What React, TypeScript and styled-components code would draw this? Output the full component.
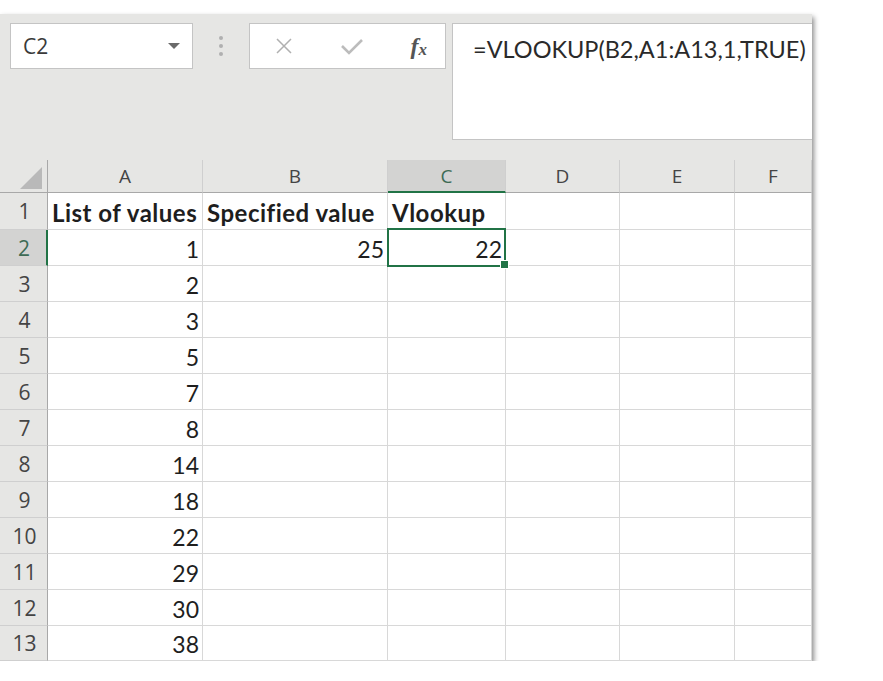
import React from "react";
import styled, { createGlobalStyle, css } from "styled-components";

const GlobalStyle = createGlobalStyle`
  body {
    margin: 0;
    background: #ffffff;
  }
`;

const columns = ["A", "B", "C", "D", "E", "F"];
const widths = [48, 155, 185, 118, 114, 115, 77];

type Row = { a: string; b?: string; c?: string; bold?: boolean };

const rows: Row[] = [
  { a: "List of values", b: "Specified value", c: "Vlookup", bold: true },
  { a: "1", b: "25", c: "22" },
  { a: "2" },
  { a: "3" },
  { a: "5" },
  { a: "7" },
  { a: "8" },
  { a: "14" },
  { a: "18" },
  { a: "22" },
  { a: "29" },
  { a: "30" },
  { a: "38" },
];

export default function App() {
  return (
    <>
      <GlobalStyle />
      <Frame>
        <Toolbar>
          <NameBox>
            <span>C2</span>
            <Caret />
          </NameBox>
          <Dots>
            <i />
            <i />
            <i />
          </Dots>
          <FxButtons>
            <svg width="18" height="18" viewBox="0 0 18 18">
              <path d="M2 2 L16 16 M16 2 L2 16" stroke="#b0b0b0" strokeWidth="1.5" fill="none" />
            </svg>
            <svg width="24" height="20" viewBox="0 0 24 20">
              <path d="M2 10 L9 17 L22 4" stroke="#bcbcbc" strokeWidth="2.6" fill="none" />
            </svg>
            <FxLabel>
              f<sub>x</sub>
            </FxLabel>
          </FxButtons>
          <FormulaInput>=VLOOKUP(B2,A1:A13,1,TRUE)</FormulaInput>
        </Toolbar>
        <Grid>
          <Corner>
            <svg width="22" height="22" viewBox="0 0 22 22">
              <path d="M22 0 L22 22 L0 22 Z" fill="#b9b9b9" />
            </svg>
          </Corner>
          {columns.map((c) => (
            <ColHead key={c} $selected={c === "C"}>
              {c}
            </ColHead>
          ))}
          {rows.map((r, i) => {
            const n = i + 1;
            return (
              <React.Fragment key={n}>
                <RowHead $selected={n === 2}>{n}</RowHead>
                <Cell $bold={r.bold}>{r.a}</Cell>
                <Cell $bold={r.bold}>{r.b}</Cell>
                <Cell $bold={r.bold}>
                  {r.c}
                  {n === 2 && <Handle />}
                </Cell>
                <Cell />
                <Cell />
                <Cell />
              </React.Fragment>
            );
          })}
        </Grid>
        <Selection />
      </Frame>
    </>
  );
}

const Frame = styled.div`
  position: relative;
  margin-top: 14px;
  width: 812px;
  box-shadow: 2px 3px 5px rgba(0, 0, 0, 0.45);
  font-family: "Lato", "Open Sans", sans-serif;
`;

const Toolbar = styled.div`
  height: 146px;
  box-sizing: border-box;
  background: #e6e6e4;
  display: flex;
  align-items: flex-start;
  padding: 9px 0 0 10px;
`;

const NameBox = styled.div`
  width: 183px;
  height: 46px;
  box-sizing: border-box;
  background: #fff;
  border: 1px solid #c4c4c4;
  display: flex;
  align-items: center;
  justify-content: space-between;
  padding: 0 12px 0 12px;
  font-family: "Open Sans", sans-serif;
  font-size: 21px;
  color: #3a3a3a;
`;

const Caret = styled.span`
  width: 0;
  height: 0;
  border-left: 6px solid transparent;
  border-right: 6px solid transparent;
  border-top: 6px solid #6a6a6a;
`;

const Dots = styled.div`
  width: 56px;
  height: 46px;
  display: flex;
  flex-direction: column;
  align-items: center;
  justify-content: center;
  gap: 4px;

  i {
    width: 4px;
    height: 4px;
    border-radius: 50%;
    background: #b0b0b0;
  }
`;

const FxButtons = styled.div`
  width: 197px;
  height: 46px;
  box-sizing: border-box;
  background: #fff;
  border: 1px solid #c4c4c4;
  display: flex;
  align-items: center;
  justify-content: space-between;
  padding: 0 18px 0 25px;
`;

const FxLabel = styled.span`
  font-family: "Liberation Serif", serif;
  font-style: italic;
  font-weight: bold;
  font-size: 24px;
  color: #555;

  sub {
    font-size: 17px;
    vertical-align: -1px;
  }
`;

const FormulaInput = styled.div`
  flex: 1;
  margin-left: 6px;
  height: 117px;
  box-sizing: border-box;
  background: #fff;
  border: 1px solid #c4c4c4;
  border-right: none;
  padding: 11px 0 0 20px;
  font-size: 23.5px;
  color: #2a2a2a;
  white-space: nowrap;
  overflow: hidden;
`;

const Grid = styled.div`
  display: grid;
  grid-template-columns: ${widths.map((w) => `${w}px`).join(" ")};
  grid-template-rows: 33px 37px repeat(11, 36px) 35px;
  background: #fff;
`;

const headBase = css`
  background: #e6e6e4;
  display: flex;
  align-items: center;
  box-sizing: border-box;
  font-family: "Open Sans", sans-serif;
  color: #444;
`;

const Corner = styled.div`
  ${headBase};
  justify-content: flex-end;
  align-items: flex-end;
  padding: 0 5px 3px 0;
  border-right: 1px solid #a8a8a8;
  border-bottom: 1px solid #a8a8a8;
`;

const ColHead = styled.div<{ $selected?: boolean }>`
  ${headBase};
  justify-content: center;
  font-size: 19px;
  border-right: 1px solid #cfcfcf;
  border-bottom: 1px solid #a8a8a8;
  ${(p) =>
    p.$selected &&
    css`
      background: #d3d3d2;
      color: #3d6b55;
      border-bottom: 2px solid #217346;
    `}
`;

const RowHead = styled.div<{ $selected?: boolean }>`
  ${headBase};
  justify-content: center;
  padding-left: 2px;
  font-size: 21px;
  border-right: 1px solid #a8a8a8;
  border-bottom: 1px solid #cfcfcf;
  ${(p) =>
    p.$selected &&
    css`
      background: #d3d3d2;
      color: #3d6b55;
      border-right: 2px solid #217346;
    `}
`;

const Cell = styled.div<{ $bold?: boolean }>`
  position: relative;
  box-sizing: border-box;
  border-right: 1px solid #d8d8d8;
  border-bottom: 1px solid #d8d8d8;
  display: flex;
  align-items: center;
  justify-content: ${(p) => (p.$bold ? "flex-start" : "flex-end")};
  padding: 2px 3px 0 4px;
  font-size: ${(p) => (p.$bold ? "24px" : "23px")};
  font-weight: ${(p) => (p.$bold ? 700 : 400)};
  letter-spacing: ${(p) => (p.$bold ? "0.5px" : "0")};
  color: #1e1e1e;
  white-space: nowrap;
  overflow: visible;
`;

const Selection = styled.div`
  position: absolute;
  left: 387px;
  top: 214px;
  width: 119px;
  height: 39px;
  box-sizing: border-box;
  border: 2px solid #217346;
  pointer-events: none;
`;

const Handle = styled.span`
  position: absolute;
  right: -4px;
  bottom: -4px;
  width: 7px;
  height: 7px;
  background: #217346;
  border: 1px solid #fff;
  z-index: 2;
`;
